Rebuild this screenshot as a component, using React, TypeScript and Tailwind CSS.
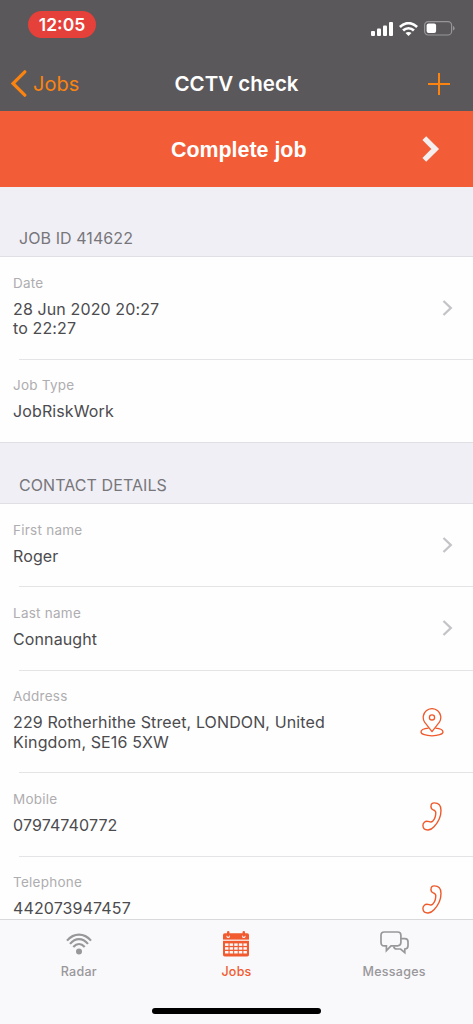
import type { ReactNode } from "react";
import clsx from "clsx";

type RowAction = "chevron" | "map" | "phone";

type Row = {
  label: string;
  lines: string[];
  action?: RowAction;
};

const jobRows: Row[] = [
  { label: "Date", lines: ["28 Jun 2020 20:27", "to 22:27"], action: "chevron" },
  { label: "Job Type", lines: ["JobRiskWork"] },
];

const contactRows: Row[] = [
  { label: "First name", lines: ["Roger"], action: "chevron" },
  { label: "Last name", lines: ["Connaught"], action: "chevron" },
  { label: "Address", lines: ["229 Rotherhithe Street, LONDON, United", "Kingdom, SE16 5XW"], action: "map" },
  { label: "Mobile", lines: ["07974740772"], action: "phone" },
  { label: "Telephone", lines: ["442073947457"], action: "phone" },
];

function ChevronIcon() {
  return (
    <svg width="11" height="16" viewBox="0 0 11 16" fill="none" stroke="#c4c3c7" strokeWidth="2.3">
      <path d="M1.5 1 L8.8 8 L1.5 15" />
    </svg>
  );
}

function MapPinIcon() {
  return (
    <svg width="24" height="29" viewBox="0 0 24 29" fill="none" stroke="#ee5a2c" strokeWidth="1.3" strokeLinejoin="round">
      <path d="M12 23.6 L4.6 14.2 A8.8 8.8 0 1 1 19.4 14.2 Z" />
      <circle cx="12" cy="9.4" r="2.6" />
      <path d="M8.6 20.2 C4 20.6 1 22 1 24 C1 26.2 6 27.8 12 27.8 S23 26.2 23 24 C23 22 20 20.6 15.4 20.2" />
    </svg>
  );
}

function PhoneIcon() {
  return (
    <svg width="20" height="29" viewBox="0 0 20 29" fill="none" stroke="#ee5a2c" strokeWidth="1.4" strokeLinejoin="round">
      <path d="M12.3 0.9 C10.3 0.9 9 2.2 9 4.4 C8.9 6.4 9.6 7.4 11.2 7.9 C13.2 8.5 13.9 9 13.8 10.8 C13.7 14 12.8 17.2 10.9 19 C9.8 20.1 8.6 20.2 7.2 19.7 C5.3 19 3.7 19 2.6 20 C1.3 21.1 0.8 22.4 0.9 23.8 C1.2 26.7 3.6 28.1 6.1 28 C8.6 27.8 10.3 26.6 12 24.7 C16.3 20.1 19 14 19 8.4 C19 3.8 17 0.9 12.3 0.9 Z" />
    </svg>
  );
}

function WifiIcon({ className }: { className?: string }) {
  return (
    <svg className={className} viewBox="0 0 26 22" fill="none" stroke="currentColor" strokeWidth="2.2">
      <path d="M1 7.6 C8 -0.4 18 -0.4 25 7.6" />
      <path d="M4 10.9 C9.5 4.4 16.5 4.4 22 10.9" />
      <path d="M7.3 13.9 C10.8 10 15.2 10 18.7 13.9" />
      <circle cx="13" cy="18.4" r="3" fill="currentColor" stroke="none" />
    </svg>
  );
}

function CalendarIcon() {
  const cells = [0, 1, 2, 3, 4];
  return (
    <svg width="26" height="26" viewBox="0 0 26 26">
      <rect x="0" y="2.2" width="26" height="23.3" rx="1.8" fill="#f15b2f" />
      <rect x="0" y="8.6" width="26" height="1.2" fill="#f9f8fb" />
      {[5.2, 20.8].map((x) => (
        <g key={x}>
          <circle cx={x} cy="5.4" r="1.7" fill="#f9f8fb" />
          <rect x={x - 1.2} y="0" width="2.4" height="5.8" rx="1.2" fill="#f15b2f" />
        </g>
      ))}
      {[12.4, 16.2, 20].map((y) =>
        cells.map((c) => (
          <rect key={`${y}-${c}`} x={2 + c * 4.6} y={y} width="3.5" height="2.5" fill="#f9f8fb" />
        ))
      )}
    </svg>
  );
}

function MessagesIcon() {
  return (
    <svg width="29" height="24" viewBox="0 0 29 24" fill="none" stroke="#98979a" strokeWidth="1.7">
      <path d="M4.2 1 H17.6 Q20.9 1 20.9 4.3 V11.5 Q20.9 14.8 17.6 14.8 H11 L6.4 19.6 V14.8 H4.2 Q1 14.8 1 11.5 V4.3 Q1 1 4.2 1 Z" />
      <path d="M21 7.6 H24.8 Q28 7.6 28 10.8 V14.8 Q28 18 24.8 18 V21.6 L20.6 18 H16.8 Q14.4 18 13.6 15.4" />
    </svg>
  );
}

function SectionHeader({ children, className }: { children: ReactNode; className?: string }) {
  return (
    <div className={clsx("flex items-end border-b border-[#e0dfe4] bg-[#f0eff5] pl-[19px] pb-[7px]", className)}>
      <h2 className="text-[16px] leading-[22px] tracking-[0.08px] text-[#77767b]">{children}</h2>
    </div>
  );
}

function DetailRow({ row, last }: { row: Row; last?: boolean }) {
  return (
    <div>
      <div className="flex items-center justify-between pr-[20px] pl-[13px]">
        <div className="pt-[16.6px] pb-[20.2px]">
          <div className="text-[13.5px] leading-[18px] tracking-[0.25px] text-[#aeadb0]">{row.label}</div>
          <div className="mt-[8px] text-[16px] leading-[19.5px] tracking-[0.12px] whitespace-nowrap text-[#4c4b4e]">
            {row.lines.map((line) => (
              <div key={line}>{line}</div>
            ))}
          </div>
        </div>
        {row.action === "chevron" && <ChevronIcon />}
        {row.action === "map" && <div className="mt-[2px] mr-[9px]"><MapPinIcon /></div>}
        {row.action === "phone" && <div className="mt-[3px] mr-[11px]"><PhoneIcon /></div>}
      </div>
      <div className={clsx("h-px", last ? "bg-[#e0dfe4]" : "ml-[19px] bg-[#e4e3e6]")} />
    </div>
  );
}

export default function App() {
  return (
    <div className="flex h-[1024px] w-[473px] flex-col overflow-hidden bg-white font-['Inter',sans-serif]">
      {/* Status bar + navigation */}
      <header className="h-[111px] shrink-0 bg-[#5a585b]">
        <div className="flex h-[56px] items-start justify-between pt-[11px] pr-[18px] pl-[28px]">
          <span className="flex h-[27px] w-[68px] items-center justify-center rounded-full bg-[#e5403a] pt-[2px] text-[17.5px] font-semibold text-white">
            12:05
          </span>
          <div className="flex items-center pt-[10px] text-white">
            <svg width="22" height="14" viewBox="0 0 22 14" fill="currentColor">
              <rect x="0" y="9" width="4" height="5" rx="1" />
              <rect x="6" y="6.5" width="4" height="7.5" rx="1" />
              <rect x="12" y="3.5" width="4" height="10.5" rx="1" />
              <rect x="18" y="0" width="4" height="14" rx="1" />
            </svg>
            <svg className="ml-[6px]" width="19" height="14" viewBox="0 0 19 14" fill="none" stroke="currentColor" strokeWidth="2.6">
              <path d="M0.9 5 C6 -0.2 13 -0.2 18.1 5" />
              <path d="M4.1 8.5 C7 5.4 12 5.4 14.9 8.5" />
              <path d="M9.5 14 L6.5 11 C8 9.5 11 9.5 12.5 11 Z" fill="currentColor" stroke="none" />
            </svg>
            <svg className="ml-[6px]" width="31" height="15" viewBox="0 0 31 15" fill="none">
              <rect x="0.6" y="0.6" width="27" height="13.4" rx="3.6" stroke="#969597" strokeWidth="1.2" />
              <rect x="2.6" y="2.5" width="9.5" height="9.6" rx="2" fill="#fff" />
              <path d="M29 5 Q30.6 5.6 30.6 7.3 T29 9.6 Z" fill="#969597" />
            </svg>
          </div>
        </div>
        <div className="grid h-[55px] grid-cols-[1fr_auto_1fr] items-center">
          <button className="flex items-center pl-[11px] text-[#fb8310]">
            <svg width="16" height="27" viewBox="0 0 16 27" fill="none" stroke="currentColor" strokeWidth="3.2" strokeLinecap="round">
              <path d="M13.8 1.8 L2 13.5 L13.8 25.2" />
            </svg>
            <span className="ml-[6px] text-[20px]">Jobs</span>
          </button>
          <h1 className="pt-[2px] text-[20.5px] font-semibold text-white">CCTV check</h1>
          <button className="justify-self-end pr-[23px] text-[#fb8310]">
            <svg width="22" height="22" viewBox="0 0 22 22" stroke="currentColor" strokeWidth="2">
              <path d="M11 0 V22 M0 11 H22" />
            </svg>
          </button>
        </div>
      </header>

      <button className="flex h-[76px] shrink-0 items-center bg-[#f25c37] pr-[33px] pl-[171px]">
        <span className="pt-[2px] font-['Liberation_Sans',sans-serif] text-[21.4px] font-bold text-white">Complete job</span>
        <svg className="ml-auto" width="18" height="26" viewBox="0 0 18 26" fill="none" stroke="#f4eeee" strokeWidth="5.4">
          <path d="M2.3 2.2 L13.2 13 L2.3 23.8" />
        </svg>
      </button>

      <main className="min-h-0 flex-1 overflow-hidden bg-[#fefefe]">
        <SectionHeader className="h-[70px]">JOB ID 414622</SectionHeader>
        {jobRows.map((row, i) => (
          <DetailRow key={row.label} row={row} last={i === jobRows.length - 1} />
        ))}
        <SectionHeader className="h-[61px]">CONTACT DETAILS</SectionHeader>
        {contactRows.map((row) => (
          <DetailRow key={row.label} row={row} />
        ))}
      </main>

      {/* Tab bar */}
      <nav className="h-[105px] shrink-0 border-t border-[#d9d8db] bg-[#f9f8fb]">
        <div className="grid h-[86px] grid-cols-3 text-[12.5px] font-medium tracking-[0.25px]">
          <div className="flex flex-col items-center pt-[13px] text-[#98979a]">
            <WifiIcon className="h-[22px] w-[26px]" />
            <span className="mt-[8px]">Radar</span>
          </div>
          <div className="flex flex-col items-center pt-[11px] text-[#f15b2f]">
            <CalendarIcon />
            <span className="mt-[6px]">Jobs</span>
          </div>
          <div className="flex flex-col items-center pt-[11px] text-[#98979a]">
            <MessagesIcon />
            <span className="mt-[8px]">Messages</span>
          </div>
        </div>
        <div className="mx-auto mt-[2px] h-[6px] w-[169px] rounded-full bg-black" />
      </nav>
    </div>
  );
}
